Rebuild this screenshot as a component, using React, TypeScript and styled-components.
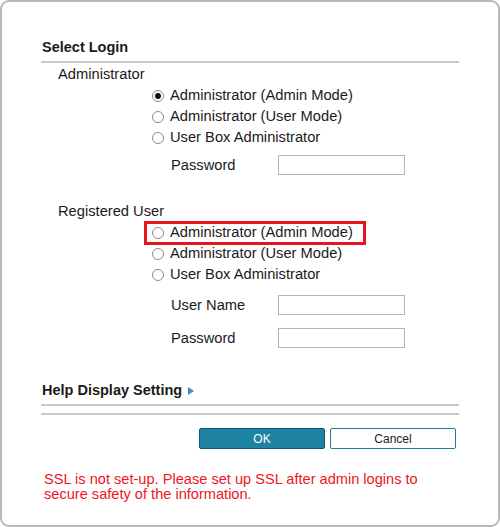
import styled, { createGlobalStyle } from "styled-components";

const GlobalStyle = createGlobalStyle`
  html, body {
    margin: 0;
    padding: 0;
    background: #ffffff;
  }
  body {
    font-family: "Liberation Sans", Arial, sans-serif;
    color: #1a1a1a;
  }
`;

const Panel = styled.div`
  width: 500px;
  height: 527px;
  box-sizing: border-box;
  border: 2px solid #b9b9b9;
  border-radius: 9px;
  background: #fff;
  padding: 35px 39px 0 39px;
  display: flex;
  flex-direction: column;
`;

const SectionTitle = styled.div<{ $top?: number }>`
  font-size: 14.5px;
  font-weight: bold;
  line-height: 20px;
  padding: 0 0 4px 1px;
  margin-top: ${(p) => p.$top ?? 0}px;
  border-bottom: 2px solid #c8c8c8;
  display: flex;
  align-items: center;
  gap: 6px;
`;

const Arrow = styled.span`
  width: 0;
  height: 0;
  border-top: 4px solid transparent;
  border-bottom: 4px solid transparent;
  border-left: 6px solid #4a86c8;
  margin-top: 1px;
`;

const Divider = styled.div`
  height: 2px;
  background: #c8c8c8;
  margin-top: 7px;
`;

const GroupLabel = styled.div<{ $top?: number }>`
  font-size: 14.7px;
  line-height: 21px;
  padding-left: 17px;
  margin-top: ${(p) => p.$top ?? 1}px;
`;

const RadioList = styled.div`
  display: flex;
  flex-direction: column;
  align-items: flex-start;
  padding-left: 111px;
`;

const RadioRow = styled.label<{ $marked?: boolean }>`
  position: relative;
  display: inline-flex;
  align-items: center;
  gap: 6px;
  font-size: 14.7px;
  line-height: 21px;
  &::after {
    content: "";
    display: ${(p) => (p.$marked ? "block" : "none")};
    position: absolute;
    top: -1px;
    bottom: -2px;
    left: -8px;
    right: -13px;
    border: 3px solid #e8141c;
    pointer-events: none;
  }
`;

const Dot = styled.span<{ $on?: boolean }>`
  width: 12px;
  height: 12px;
  box-sizing: border-box;
  border-radius: 50%;
  border: 1px solid #8a8a8a;
  background: #fff;
  display: flex;
  align-items: center;
  justify-content: center;
  &::before {
    content: "";
    width: 6px;
    height: 6px;
    border-radius: 50%;
    background: #111;
    display: ${(p) => (p.$on ? "block" : "none")};
  }
`;

const FieldRow = styled.div<{ $top: number }>`
  display: flex;
  align-items: center;
  height: 22px;
  margin-top: ${(p) => p.$top}px;
  padding-left: 130px;
  font-size: 14.7px;
`;

const FieldLabel = styled.span`
  width: 107px;
`;

const TextBox = styled.input`
  width: 127px;
  height: 20px;
  box-sizing: border-box;
  border: 1px solid #b4b4b4;
  margin: 0;
  padding: 0 3px;
  background: #fff;
`;

const Buttons = styled.div`
  display: flex;
  gap: 5px;
  padding-left: 158px;
  margin-top: 13px;
`;

const Button = styled.button<{ $primary?: boolean }>`
  width: 126px;
  height: 21px;
  box-sizing: border-box;
  border-radius: 2px;
  font-family: "Liberation Sans", Arial, sans-serif;
  font-size: 12px;
  padding: 0;
  border: 1px solid ${(p) => (p.$primary ? "#0f5b73" : "#1f7d98")};
  background: ${(p) => (p.$primary ? "#1d83a0" : "#fff")};
  color: ${(p) => (p.$primary ? "#fff" : "#222")};
`;

const Warning = styled.p`
  margin: 23px 0 0 3px;
  width: 400px;
  color: #f0141e;
  font-size: 14.6px;
  line-height: 15px;
`;

type Choice = { text: string; on?: boolean; marked?: boolean };

function Radios({ items }: { items: Choice[] }) {
  return (
    <RadioList>
      {items.map((c) => (
        <RadioRow key={c.text} $marked={c.marked}>
          <Dot $on={c.on} />
          {c.text}
        </RadioRow>
      ))}
    </RadioList>
  );
}

export default function App() {
  return (
    <>
      <GlobalStyle />
      <Panel>
        <SectionTitle>Select Login</SectionTitle>

        <GroupLabel>Administrator</GroupLabel>
        <Radios
          items={[
            { text: "Administrator (Admin Mode)", on: true },
            { text: "Administrator (User Mode)" },
            { text: "User Box Administrator" },
          ]}
        />
        <FieldRow $top={6}>
          <FieldLabel>Password</FieldLabel>
          <TextBox type="password" />
        </FieldRow>

        <GroupLabel $top={25}>Registered User</GroupLabel>
        <Radios
          items={[
            { text: "Administrator (Admin Mode)", marked: true },
            { text: "Administrator (User Mode)" },
            { text: "User Box Administrator" },
          ]}
        />
        <FieldRow $top={9}>
          <FieldLabel>User Name</FieldLabel>
          <TextBox type="text" />
        </FieldRow>
        <FieldRow $top={11}>
          <FieldLabel>Password</FieldLabel>
          <TextBox type="password" />
        </FieldRow>

        <SectionTitle $top={31}>
          Help Display Setting
          <Arrow />
        </SectionTitle>
        <Divider />

        <Buttons>
          <Button $primary>OK</Button>
          <Button>Cancel</Button>
        </Buttons>

        <Warning>
          SSL is not set-up. Please set up SSL after admin logins to secure
          safety of the information.
        </Warning>
      </Panel>
    </>
  );
}
